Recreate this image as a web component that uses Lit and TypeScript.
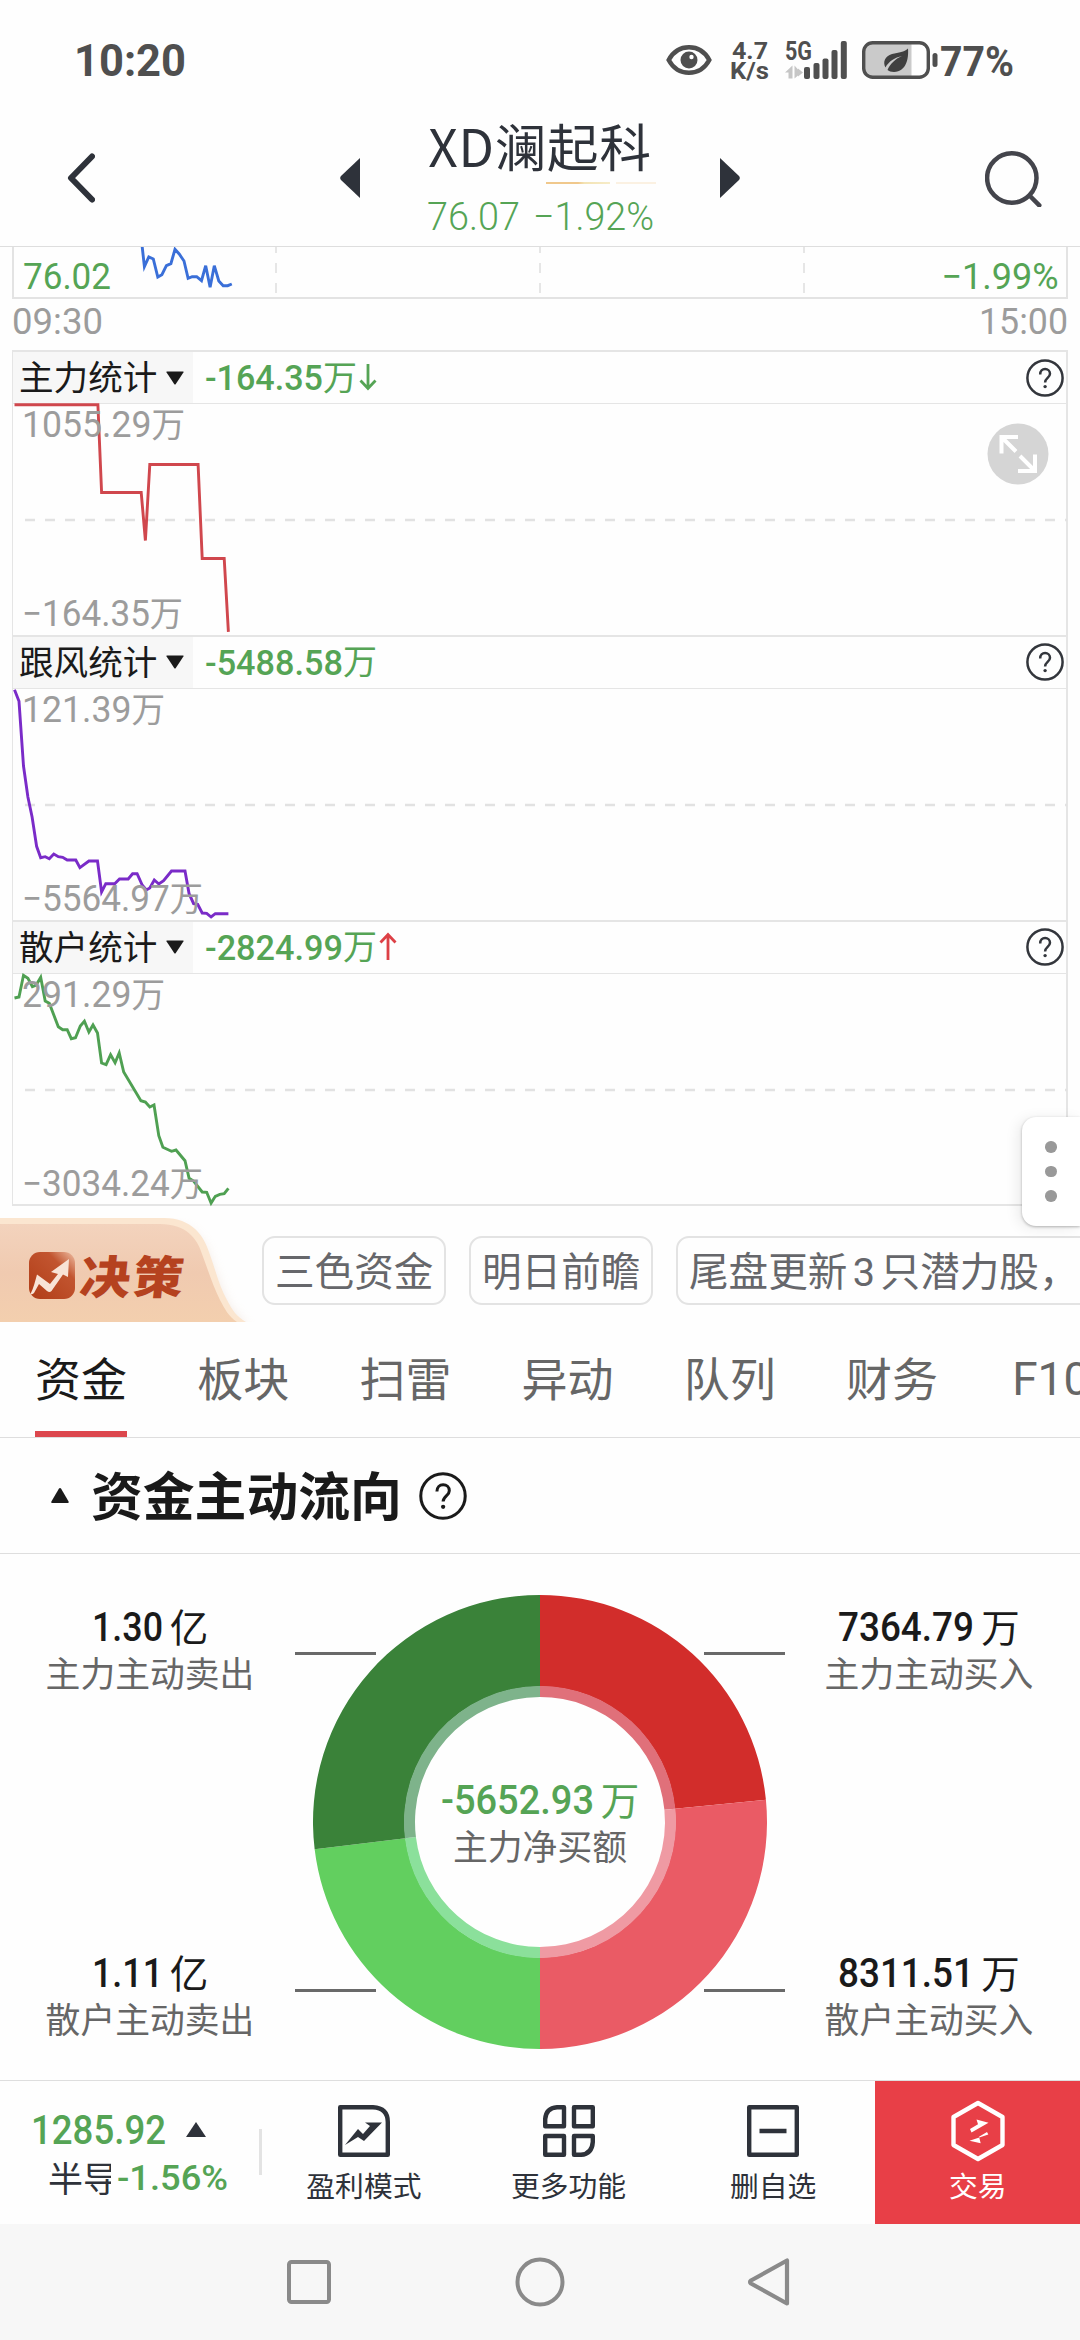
import { LitElement, html, svg, css, nothing } from "lit";
import { customElement, property } from "lit/decorators.js";

type Pt = [number, number];

/* Samples are stored on a fine grid: 2.904 units per pixel across, 3 down. */
const line = (pts: Pt[], base: number) =>
  pts.map(([x, y]) => `${(x / 2.904 - 12.6).toFixed(1)},${((y - base) / 3).toFixed(1)}`).join(" ");

const PRICE: Pt[] = [[414,735],[421,800],[434,771],[447,777],[460,831],[472,824],[485,797],[498,791],[510,748],[522,762],[536,783],[548,835],[560,830],[573,830],[587,842],[599,797],[612,862],[624,797],[637,843],[650,857],[663,857],[675,852]];

interface Stat {
  name: string; value: string; trend?: "up" | "down";
  valueW: number; color: string; base: number; pts: Pt[];
  hi: string; hiW: number; lo: string; loW: number; expand?: boolean;
}

const STATS: Stat[] = [
  { name: "主力统计", value: "-164.35", trend: "down", valueW: 118, color: "#d0474d", base: 190.5,
    hi: "1055.29", hiW: 163, lo: "−164.35", loW: 161, expand: true,
    pts: [[41,193],[283,193],[294,456],[409,456],[421,600],[434,372],[574,372],[586,654],[650,654],[662,874]] },
  { name: "跟风统计", value: "-5488.58", valueW: 138, color: "#7a2bc8", base: 206,
    hi: "121.39", hiW: 143, lo: "−5564.97", loW: 181,
    pts: [[41,208],[54,243],[67,437],[80,530],[92,590],[105,678],[117,712],[130,709],[142,715],[155,701],[168,709],[181,711],[194,719],[219,719],[231,742],[257,722],[282,722],[294,815],[306,790],[332,790],[346,776],[371,776],[384,760],[397,760],[412,795],[424,809],[434,803],[447,779],[460,791],[474,781],[497,752],[536,752],[548,820],[561,850],[573,852],[586,878],[599,879],[612,890],[624,880],[662,880]] },
  { name: "散户统计", value: "-2824.99", trend: "up", valueW: 138, color: "#4fa052", base: 220,
    hi: "291.29", hiW: 143, lo: "−3034.24", loW: 181,
    pts: [[41,292],[54,289],[67,224],[80,233],[93,258],[104,253],[117,230],[130,301],[142,308],[168,378],[181,387],[194,387],[206,414],[218,411],[232,376],[244,362],[257,394],[269,373],[282,397],[294,487],[307,492],[320,462],[333,486],[345,457],[358,514],[408,600],[421,604],[434,619],[446,613],[460,705],[472,740],[497,752],[510,748],[536,780],[548,833],[561,841],[586,874],[599,875],[612,907],[624,887],[637,881],[650,879],[662,863]] },
];

/* A figure set to an exact width; the box is as tall as the digits. */
const num = (text: string, w: number, size: number, cls = "") => {
  const h = Math.round(size * 0.711);
  return html`<svg class="num ${cls}" width=${w} height=${h}>
    <text x="0" y=${h} font-size=${size} textLength=${w} lengthAdjust="spacingAndGlyphs">${text}</text>
  </svg>`;
};

const help = (size: number, sw: number) => html`
  <svg class="help" width=${size} height=${size} viewBox="0 0 38 38" fill="none" stroke="currentColor" stroke-width=${sw}>
    <circle cx="19" cy="19" r="17.6"/>
    <path d="M14.200 15.400c0-3.400 2.200-5.300 4.900-5.300s4.900 1.900 4.900 4.700c0 4-4.900 4.200-4.900 8.600"/>
    <circle cx="19.100" cy="27.600" r="1.700" fill="currentColor" stroke="none"/>
  </svg>`;

@customElement("stat-panel")
export class StatPanel extends LitElement {
  @property({ attribute: false }) stat!: Stat;

  static styles = css`
    :host { display: block; box-sizing: border-box; width: 1056px; height: 284.75px; border: solid #e5e5e5; border-width: 2px 2px 0 1px; color: #1a1a1a; }
    .head { display: flex; align-items: center; height: 51px; border-bottom: 1.5px solid #e5e5e5; }
    .pick { display: flex; align-items: center; gap: 9px; width: 180px; height: 51px; padding-left: 6px; box-sizing: border-box; background: #f7f7f7; }
    .name { font: 34.6px/40px "Noto Sans CJK SC", sans-serif; margin-top: -5px; white-space: nowrap; }
    .value { display: flex; align-items: center; margin-left: 12px; color: #55a455; flex: 1; }
    .num { overflow: visible; display: block; fill: currentColor; font-family: Roboto, sans-serif; font-weight: 500; }
    .unit { font: 34px/40px "Noto Sans CJK SC", sans-serif; margin-top: -4px; }
    .arrow { margin: -2px 0 0 2px; }
    .up { color: #dd4046; }
    .help { color: #33363c; margin-right: 2px; }
    .plot { position: relative; height: 231px; }
    .chart { display: block; overflow: visible; }
    .axis { font: 36px Roboto, sans-serif; fill: #9c9c9c; }
    .cjk { font-family: "Noto Sans CJK SC", sans-serif; font-size: 34px; }
    .expand { position: absolute; left: 974px; top: 19px; }
  `;

  render() {
    const s = this.stat;
    return html`
      <div class="head">
        <div class="pick"><span class="name">${s.name}</span>
          <svg width="18" height="14" viewBox="0 0 18 14"><path d="M1 .5h16q1 0 .4 1L9.8 13q-.8 1-1.6 0L.6 1.5Q0 .5 1 .5z" fill="#1a1a1a"/></svg>
        </div>
        <div class="value">${num(s.value, s.valueW, 35)}<span class="unit">万</span>
          ${s.trend ? html`<svg class="arrow ${s.trend}" width="18" height="28" viewBox="0 0 18 28" fill="none" stroke="currentColor" stroke-width="2.8">
            <path d=${s.trend === "down" ? "M9 1v24M1.5 17.5 9 25.500l7.500-8" : "M9 28V3M1.500 10.500 9 2.500l7.500 8"}/></svg>` : nothing}
        </div>
        ${help(38, 2.5)}
      </div>
      <div class="plot">
        <svg class="chart" width="1056" height="231">
          <line x1="12" x2="1054" y1="116" y2="116" stroke="#e2e2e2" stroke-width="2.5" stroke-dasharray="10 10"/>
          <polyline points=${line(s.pts, s.base)} fill="none" stroke=${s.color} stroke-width="2.9"/>
          <text class="axis" x="9" y="33" textLength=${s.hiW} lengthAdjust="spacingAndGlyphs">${s.hi}<tspan class="cjk">万</tspan></text>
          <text class="axis" x="9" y="222" textLength=${s.loW} lengthAdjust="spacingAndGlyphs">${s.lo}<tspan class="cjk">万</tspan></text>
        </svg>
        ${s.expand ? html`<svg class="expand" width="62" height="62" viewBox="0 0 62 62" fill="none" stroke="#fff" stroke-width="4">
          <circle cx="31" cy="31" r="30.500" fill="#d5d5d5" stroke="none"/>
          <path d="M31 14H14.500v16.500M14.500 14 29 28.500M48 31.500V48H31M48 48 33 33"/></svg>` : nothing}
      </div>`;
  }
}

const C = { x: 245, y: 268 };
const sector = (a0: number, a1: number, r1: number, r0: number) => {
  const p = (a: number, r: number) => {
    const t = (a * Math.PI) / 180;
    return `${(C.x + r * Math.sin(t)).toFixed(2)} ${(C.y - r * Math.cos(t)).toFixed(2)}`;
  };
  return `M${p(a0, r1)}A${r1} ${r1} 0 0 1 ${p(a1, r1)}L${p(a1, r0)}A${r0} ${r0} 0 0 0 ${p(a0, r0)}Z`;
};
const SLICES: [number, number, string, string][] = [
  [0, 84.4, "#d22d2b", "#e0707a"],
  [84.4, 180, "#ea5b65", "#ef9aa3"],
  [180, 263.1, "#62cf5f", "#8be09b"],
  [263.1, 360, "#3a8239", "#7eb38b"],
];

@customElement("app-root")
export class AppRoot extends LitElement {
  static styles = css`
    :host { display: block; position: relative; width: 1080px; height: 2340px; overflow: hidden; background: #fefefe; color: #1a1a1a; font-family: "Noto Sans CJK SC", sans-serif; }
    svg { display: block; flex: none; }
    .num { overflow: visible; fill: currentColor; font-family: Roboto, sans-serif; font-weight: 400; }
    .light { font-weight: 300; }
    .mid { font-weight: 500; }
    .bold { font-weight: 700; }
    .green { color: #55a455; }
    .grey { color: #9c9c9c; }

    .status { display: flex; align-items: center; box-sizing: border-box; height: 110px; padding: 10px 66px 0 74px; color: #4f4f4f; }
    .eye { margin-left: auto; }
    .speed { display: grid; gap: 3px; justify-items: center; margin-left: 18px; }
    .signal { margin-left: 16px; }
    .battery { margin: 0 2px 0 15px; }

    .header { display: flex; box-sizing: border-box; height: 137px; border-bottom: 1px solid #dedede; align-items: center; color: #2e323a; padding-left: 67px; }
    .prev { margin-left: 245px; }
    .title { width: 360px; height: 136px; display: flex; flex-direction: column; align-items: center; }
    .stock { font-size: 51.5px; line-height: 60px; padding-top: 5px; letter-spacing: .8px; height: 60px; white-space: nowrap; }
    .dots { display: grid; grid-template-columns: 64px 40px; gap: 6px; margin: 7px 0 0 121px; }
    .dot-a { height: 2px; background: linear-gradient(90deg, #f0c88c 0 50%, #f3e3b4 60%, #f6ecc8); }
    .dot-b { height: 2px; background: #fbf1e2; }
    .quote { display: flex; gap: 13px; margin-top: 19px; }
    .search { margin-left: 245px; }

    .strip { display: block; margin-left: 12px; }
    .times { display: flex; justify-content: space-between; height: 42px; padding: 0 12px; margin-top: 9px; }
    .panels { padding-left: 12px; height: 854px; }
    .close { margin-left: 12px; width: 1055px; height: 2px; background: #e5e5e5; }

    .promo { display: flex; height: 104px; margin-top: 12px; width: 1400px; }
    .badge { width: 262px; position: relative; height: 104px; }
    .badge-text { position: absolute; left: 82px; top: 26px; font-size: 49px; line-height: 60px; font-weight: 900; letter-spacing: 2.500px; color: #b5421f; transform: skewX(-6deg) scale(1.03, .93); }
    .chip { box-sizing: border-box; height: 69px; margin: 18px 22.700px 0 0; padding: 0 11px; border: 2px solid #e3e3e3; border-radius: 13px; font-size: 39.6px; line-height: 62px; color: #66676b; white-space: nowrap; }
    .three { font-family: Roboto, sans-serif; padding: 0 5.500px; }

    .tabs { display: flex; box-sizing: border-box; height: 116px; border-bottom: 1px solid #dedede; padding-left: 35px; gap: 70.200px; width: 1400px; font-size: 46px; line-height: 108px; color: #666; }
    .tab { width: 92px; flex: none; white-space: nowrap; }
    .tab.on { color: #1a1a1a; box-sizing: border-box; height: 115px; border-bottom: 6px solid #dc474d; }
    .tab.f10 { font-family: Roboto, sans-serif; padding-left: 4px; line-height: 115px; }

    .section { display: flex; align-items: center; box-sizing: border-box; height: 116px; border-bottom: 1px solid #dedede; padding-left: 51px; }
    .section-title { font-size: 51.8px; font-weight: 700; line-height: 60px; margin: -4px 17px 0 22px; white-space: nowrap; }

    .flow { display: grid; grid-template-columns: 295px 490px 295px; height: 526px; }
    .col { display: flex; flex-direction: column; gap: 262px; padding-top: 58px; }
    .left { margin-left: 5px; }
    .right { margin-right: 7px; }
    .entry { display: flex; flex-direction: column; align-items: center; height: 84px; gap: 11px; }
    .amount { display: flex; align-items: center; gap: 7px; height: 29px; }
    .unit { font-size: 38.500px; line-height: 40px; margin-top: -4px; }
    .caption { font-size: 34.8px; line-height: 40px; color: #666; white-space: nowrap; }
    .wheel { position: relative; }
    .net { position: absolute; inset: 0; display: flex; flex-direction: column; align-items: center; padding-top: 231px; gap: 11px; }

    .dock { display: flex; box-sizing: border-box; height: 144px; border-top: 1px solid #dedede; color: #2e323a; }
    .index { width: 262px; box-sizing: border-box; padding: 34px 0 0 31px; }
    .index-row { display: flex; align-items: center; gap: 20px; }
    .index-row.low { gap: 6px; padding-left: 17px; height: 30px; margin-top: 18px; }
    .sector { font-size: 35px; line-height: 50px; width: 63px; overflow: hidden; white-space: nowrap; }
    .rule { width: 3px; height: 46px; background: #e3e3e3; align-self: flex-start; margin: 48px 0 0 -3px; }
    .action { width: 204.600px; height: 143px; display: flex; flex-direction: column; align-items: center; font-size: 28.800px; line-height: 36px; flex: none; white-space: nowrap; }
    .action svg { margin: 19px 0 4.500px; }
    .trade { background: #e83f47; color: #fff; }

    .nav { display: flex; align-items: center; height: 116px; background: #f7f7f7; padding-left: 287px; }
    .home { margin-left: 184px; }
    .back { margin-left: 182px; }

    .more { position: absolute; right: 0; top: 1117px; width: 58px; height: 109px; box-sizing: border-box; border-radius: 14px 0 0 14px; background: #fff; box-shadow: 0 1px 3px rgba(0,0,0,.28), -4px 2px 14px rgba(0,0,0,.08); display: flex; flex-direction: column; align-items: center; justify-content: center; gap: 13px; }
    .pip { width: 11.500px; height: 11.500px; border-radius: 50%; background: #999; }
  `;

  private entry(v: string, w: number, unit: string, caption: string) {
    return html`<div class="entry">
      <div class="amount">${num(v, w, 41, "mid")}<span class="unit">${unit}</span></div>
      <span class="caption">${caption}</span>
    </div>`;
  }

  render() {
    return html`
      <div class="status">
        ${num("10:20", 112, 44, "bold")}
        <svg class="eye" width="46" height="32" viewBox="0 0 46 32" fill="none" stroke="#4f4f4f" stroke-width="4.500">
          <path d="M2.700 16C7 8 14.500 3.300 23 3.300S39 8 43.300 16C39 24 31.500 28.700 23 28.700S7 24 2.700 16z"/>
          <circle cx="23" cy="16" r="8.500" fill="#4f4f4f" stroke="none"/><circle cx="25.500" cy="13" r="2.200" fill="#fff" stroke="none"/>
        </svg>
        <div class="speed">${num("4.7", 36, 24, "bold")}${num("K/s", 39, 24, "bold")}</div>
        <svg class="signal" width="62" height="40" viewBox="0 0 62 40" fill="#4f4f4f">
          <text x="0" y="19.500" class="num bold" font-size="25" textLength="27" lengthAdjust="spacingAndGlyphs">5G</text>
          <path d="M7.500 25.500v13h-4v-6H0zM9.500 38.500v-13l3.500 4v-1l5 4-5 4v-1z" fill="#c6c6c6"/>
          <rect x="19" y="27" width="6" height="12" rx="2"/><rect x="28.500" y="23" width="6" height="16" rx="2"/>
          <rect x="37.500" y="18.500" width="6" height="20.500" rx="2"/><rect x="46.500" y="10" width="6" height="29" rx="2"/>
          <rect x="55.800" y="1" width="6" height="38" rx="2"/>
        </svg>
        <svg class="battery" width="76" height="38" viewBox="0 0 76 38">
          <path d="M9 2.500h40.500v33H9q-7-1-7-8V10q0-6.500 7-7.500z" fill="#cacaca"/>
          <rect x="1.700" y="1.700" width="64.600" height="34.600" rx="9" fill="none" stroke="#4f4f4f" stroke-width="3.400"/>
          <rect x="70.500" y="12" width="5" height="14" rx="2.500" fill="#4f4f4f"/>
          <path d="M46 7.500c.8 10-1.500 23-14 23.500-3 0-5-.8-6.500-2C28 23 33 18 40 15c-7 1.500-13.500 5.500-16.500 11.500C20.500 21 23 15 30 13c7-1.800 12-1.500 16-5.500z" fill="#404040"/>
        </svg>
        ${num("77%", 74, 43, "bold")}
      </div>

      <div class="header">
        <svg width="28" height="50" viewBox="0 0 28 50" fill="none" stroke="#2e323a" stroke-width="6" stroke-linecap="round" stroke-linejoin="round"><path d="M25 3.500 4 25l21 21.500"/></svg>
        <svg class="prev" width="20" height="40" viewBox="0 0 20 40"><path d="M20 0v40L1 22q-1.600-2 0-4z" fill="#2e323a"/></svg>
        <div class="title">
          <div class="stock">XD澜起科</div>
          <div class="dots"><div class="dot-a"></div><div class="dot-b"></div></div>
          <div class="quote green">${num("76.07", 93, 38.500, "light")}${num("−1.92%", 121, 38.500, "light")}</div>
        </div>
        <svg width="20" height="40" viewBox="0 0 20 40"><path d="M0 0v40l19-18q1.600-2 0-4z" fill="#2e323a"/></svg>
        <svg class="search" width="57" height="58" viewBox="0 0 57 58" fill="none" stroke="#44454c" stroke-width="4.500" stroke-linecap="round"><circle cx="26.800" cy="29" r="24.700"/><path d="m45 47 9.300 9.300"/></svg>
      </div>

      <svg class="strip" width="1056" height="52">
        <path d="M1 0v51h1054V0" fill="none" stroke="#e3e3e3" stroke-width="2"/>
        <path d="M264 0v6m0 10v10m0 10v10M528 0v6m0 10v10m0 10v10M792 0v6m0 10v10m0 10v10" stroke="#e6e6e6" stroke-width="2"/>
        <polyline points=${line(PRICE, 741)} fill="none" stroke="#3a6fd8" stroke-width="2.900"/>
        <text class="num green" x="11" y="42" font-size="36" textLength="88" lengthAdjust="spacingAndGlyphs">76.02</text>
        <text class="num green" x="929.500" y="42" font-size="36" textLength="117" lengthAdjust="spacingAndGlyphs">−1.99%</text>
      </svg>
      <div class="times grey">${num("09:30", 91, 36)}${num("15:00", 89, 36)}</div>

      <div class="panels">${STATS.map((s) => html`<stat-panel .stat=${s}></stat-panel>`)}</div>
      <div class="close"></div>

      <div class="promo">
        <div class="badge">
          <svg width="262" height="104" viewBox="0 0 262 104">
            <defs>
              <linearGradient id="skin" x1="0" y1="0" x2="0" y2="1"><stop offset="0" stop-color="#f3d3bd"/><stop offset=".5" stop-color="#f0cab0"/><stop offset="1" stop-color="#f3cfae"/></linearGradient>
              <linearGradient id="seal" x1="1" y1="0" x2="0" y2="1"><stop offset="0" stop-color="#efc0a5"/><stop offset=".3" stop-color="#c25530"/><stop offset="1" stop-color="#b03c16"/></linearGradient>
              <filter id="soft" x="-10%" y="-20%" width="130%" height="140%"><feGaussianBlur stdDeviation="6"/></filter>
            </defs>
            <path d="M0 8h170c28 2 36 22 42 42l14 36 22 26H0z" fill="#d9b8a0" opacity=".35" filter="url(#soft)"/>
            <path d="M0 0h164c28 0 40 18 45 34 6 16 10 34 18 48 5 10 10 17 19 22H0z" fill="#fbe6d0"/>
            <path d="M0 6h160c26 0 37 14 42 30 6 16 11 32 18 46 5 9 8 16 17 22H0z" fill="url(#skin)"/>
            <rect x="29" y="34" width="46" height="47" rx="11" fill="url(#seal)"/>
            <path d="M30.500 76c3-6 4.500-12 6.500-19.500l13 9.500 8-10-7-2 18-13-1 18-5-2.500-11.500 16.500q-2 2-4.500 0l-8-7-5 9q-2 2-3.500 1z" fill="#f8e3d6"/>
          </svg>
          <span class="badge-text">决策</span>
        </div>
        <div class="chip">三色资金</div>
        <div class="chip">明日前瞻</div>
        <div class="chip">尾盘更新<span class="three">3</span>只潜力股，</div>
      </div>

      <div class="tabs">
        <div class="tab on">资金</div>
        ${["板块", "扫雷", "异动", "队列", "财务"].map((t) => html`<div class="tab">${t}</div>`)}
        <div class="tab f10">F10</div>
      </div>

      <div class="section">
        <svg width="18" height="15" viewBox="0 0 18 15"><path d="M9 0q.6 0 1 .6l7.600 12.900q.5 1.500-.8 1.500H1.200Q0 15 .4 13.500L8 .6Q8.400 0 9 0z" fill="#1a1a1a"/></svg>
        <span class="section-title">资金主动流向</span>
        ${help(48, 2.400)}
      </div>

      <div class="flow">
        <div class="col left">
          ${this.entry("1.30", 71, "亿", "主力主动卖出")}
          ${this.entry("1.11", 71, "亿", "散户主动卖出")}
        </div>
        <div class="wheel">
          <svg width="490" height="526">
            ${SLICES.map(([a, b, c, d]) => svg`<path d=${sector(a, b, 227, 135.500)} fill=${c}/><path d=${sector(a, b, 136, 125)} fill=${d}/>`)}
            <path d="M0 99.500h81M409 99.500h81M0 436.500h81M409 436.500h81" stroke="#696969" stroke-width="3"/>
          </svg>
          <div class="net">
            <div class="amount green">${num("-5652.93", 153, 41, "mid")}<span class="unit">万</span></div>
            <span class="caption">主力净买额</span>
          </div>
        </div>
        <div class="col right">
          ${this.entry("7364.79", 136, "万", "主力主动买入")}
          ${this.entry("8311.51", 136, "万", "散户主动买入")}
        </div>
      </div>

      <div class="dock">
        <div class="index">
          <div class="index-row green">${num("1285.92", 135, 41, "mid")}<svg width="20" height="15" viewBox="0 0 20 15"><path d="M10 0l10 15H0z" fill="#2e323a"/></svg></div>
          <div class="index-row low"><span class="sector">半导</span><span class="green">${num("-1.56%", 111, 35, "mid")}</span></div>
        </div>
        <div class="rule"></div>
        <div class="action">
          <svg width="62" height="62" viewBox="0 0 62 62" fill="none" stroke="#2e323a" stroke-width="4.400" stroke-linejoin="round">
            <path d="M7.200 7.200H40Q54.800 8 54.800 22v32.800H7.200z"/>
            <path d="M12 45 25 29l5 5 7-8-5-3.500h17L31 41l-6-4z" fill="#2e323a" stroke="none"/>
          </svg>盈利模式</div>
        <div class="action">
          <svg width="62" height="62" viewBox="0 0 62 62" fill="none" stroke="#2e323a" stroke-width="4.400" stroke-linejoin="round">
            <path d="M26 7.200v19H7.200V19Q8 8 19 7.200zM36 7.200h18.800v19H36zM7.200 36H26v18.800H7.200zM36 36h18.800v6Q54 54 43 54.800h-7z"/>
          </svg>更多功能</div>
        <div class="action">
          <svg width="62" height="62" viewBox="0 0 62 62" fill="none" stroke="#2e323a" stroke-width="4.400" stroke-linejoin="round">
            <path d="M7.200 7.200h47.600v47.600H7.200zM17.500 31h27"/>
          </svg>删自选</div>
        <div class="action trade">
          <svg width="62" height="62" viewBox="0 0 62 62" fill="none" stroke="#fff" stroke-width="4.400" stroke-linejoin="round">
            <path d="M31 3 55.500 17v28L31 59 6.500 45V17z"/>
            <path d="M23 29l8-4.800-1.500-4.700 12 3.200L24.500 32.500zM40 32l-8 4.800 1.700 6.500-11.200-2.500L41.300 34.500z" fill="#fff" stroke="none"/>
          </svg>交易</div>
      </div>

      <div class="nav">
        <svg width="44" height="44" fill="none" stroke="#8a8a8a" stroke-width="4"><rect x="2" y="2" width="40" height="40" rx="2.500"/></svg>
        <svg class="home" width="50" height="50" fill="none" stroke="#8a8a8a" stroke-width="4"><circle cx="25" cy="25" r="22.500"/></svg>
        <svg class="back" width="43" height="50" fill="none" stroke="#8a8a8a" stroke-width="4.200" stroke-linejoin="round"><path d="M40 3.500v43L4 26.500q-2-1.500 0-3z"/></svg>
      </div>

      <div class="more"><i class="pip"></i><i class="pip"></i><i class="pip"></i></div>
    `;
  }
}
